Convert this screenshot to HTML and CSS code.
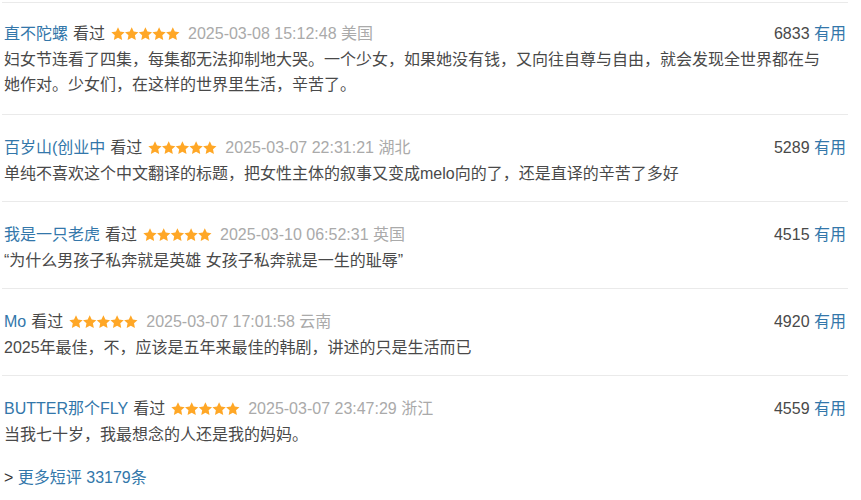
FILE: index.html
```html
<!DOCTYPE html>
<html>
<head>
    <title>短评</title>
    <link rel="stylesheet" href="styles.css">
</head>
<body>
    <div class="comments">
        <div class="comment-item">
            <div class="comment-info">
                <span class="meta">
                    <a href="#" class="user">直不陀螺</a>
                    <span>看过</span>
                    <svg class="stars" viewBox="0 0 70 14"><use href="#five-stars"/></svg>
                    <span class="time">2025-03-08 15:12:48 美国</span>
                </span>
                <span class="votes">6833 <a href="#">有用</a></span>
            </div>
            <p class="short">妇女节连看了四集，每集都无法抑制地大哭。一个少女，如果她没有钱，又向往自尊与自由，就会发现全世界都在与她作对。少女们，在这样的世界里生活，辛苦了。</p>
        </div>

        <div class="comment-item">
            <div class="comment-info">
                <span class="meta">
                    <a href="#" class="user">百岁山(创业中</a>
                    <span>看过</span>
                    <svg class="stars" viewBox="0 0 70 14"><use href="#five-stars"/></svg>
                    <span class="time">2025-03-07 22:31:21 湖北</span>
                </span>
                <span class="votes">5289 <a href="#">有用</a></span>
            </div>
            <p class="short">单纯不喜欢这个中文翻译的标题，把女性主体的叙事又变成melo向的了，还是直译的辛苦了多好</p>
        </div>

        <div class="comment-item">
            <div class="comment-info">
                <span class="meta">
                    <a href="#" class="user">我是一只老虎</a>
                    <span>看过</span>
                    <svg class="stars" viewBox="0 0 70 14"><use href="#five-stars"/></svg>
                    <span class="time">2025-03-10 06:52:31 英国</span>
                </span>
                <span class="votes">4515 <a href="#">有用</a></span>
            </div>
            <p class="short">“为什么男孩子私奔就是英雄 女孩子私奔就是一生的耻辱”</p>
        </div>

        <div class="comment-item">
            <div class="comment-info">
                <span class="meta">
                    <a href="#" class="user">Mo</a>
                    <span>看过</span>
                    <svg class="stars" viewBox="0 0 70 14"><use href="#five-stars"/></svg>
                    <span class="time">2025-03-07 17:01:58 云南</span>
                </span>
                <span class="votes">4920 <a href="#">有用</a></span>
            </div>
            <p class="short">2025年最佳，不，应该是五年来最佳的韩剧，讲述的只是生活而已</p>
        </div>

        <div class="comment-item last">
            <div class="comment-info">
                <span class="meta">
                    <a href="#" class="user">BUTTER那个FLY</a>
                    <span>看过</span>
                    <svg class="stars" viewBox="0 0 70 14"><use href="#five-stars"/></svg>
                    <span class="time">2025-03-07 23:47:29 浙江</span>
                </span>
                <span class="votes">4559 <a href="#">有用</a></span>
            </div>
            <p class="short">当我七十岁，我最想念的人还是我的妈妈。</p>
        </div>

        <p class="more">&gt; <a href="#">更多短评 33179条</a></p>
    </div>

    <!-- star shape used by every rating -->
    <svg width="0" height="0" class="defs">
        <defs>
            <polygon id="star" points="7,0.3 9,4.55 13.66,5.14 10.23,8.35 11.11,12.96 7,10.7 2.89,12.96 3.77,8.35 0.34,5.14 5,4.55"/>
            <g id="five-stars" fill="#ffa726">
                <use href="#star"/>
                <use href="#star" x="13.7"/>
                <use href="#star" x="27.4"/>
                <use href="#star" x="41.1"/>
                <use href="#star" x="54.8"/>
            </g>
        </defs>
    </svg>
</body>
</html>
```

FILE: styles.css
```css
body {
    font-family: "Liberation Sans", Arial, "Noto Sans CJK SC", sans-serif;
    font-size: 16px;
    color: #494949;
    margin: 0;
    padding: 0;
    background-color: #fff;
}

a {
    color: #3377aa;
    text-decoration: none;
}

.comments {
    width: 846px;
    margin: 2px 0 0 2px;
    border-top: 1px solid #eaeaea;
}

.comment-item {
    padding: 20px 2px 15px 2px;
    border-bottom: 1px solid #eaeaea;
}

.comment-item:first-child {
    padding-top: 18px;
    padding-bottom: 17px;
}

.comment-item.last {
    border-bottom: none;
}

.comment-info {
    display: flex;
    justify-content: space-between;
    align-items: center;
    line-height: 26px;
    white-space: nowrap;
}

.meta {
    display: flex;
    align-items: center;
    gap: 5px;
}

.stars {
    width: 70px;
    height: 14px;
    margin: 0 2px 0 1px;
}

.time {
    color: #aaa;
}

.votes {
    color: #494949;
}

.short {
    margin: 0;
    line-height: 25px;
    padding-right: 18px;
}

.more {
    margin: 3px 0 0 0;
    padding-left: 2px;
    line-height: 26px;
    color: #333;
}

.defs {
    position: absolute;
}
```
